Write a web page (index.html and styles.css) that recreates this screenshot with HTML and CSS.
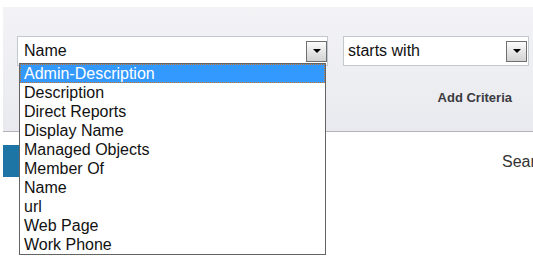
FILE: index.html
```html
<!DOCTYPE html>
<html lang="en">
<head>
  <meta charset="UTF-8">
  <title>Search Criteria</title>
  <link rel="stylesheet" href="styles.css">
</head>
<body>
  <div class="page">
    <div class="criteria-panel">
      <div class="criteria-row">
        <div class="select-box attr-select">
          <span class="select-value">Name</span>
          <span class="select-arrow"></span>
          <!-- open option list -->
          <ul class="option-list">
            <li class="option selected">Admin-Description</li>
            <li class="option">Description</li>
            <li class="option">Direct Reports</li>
            <li class="option">Display Name</li>
            <li class="option">Managed Objects</li>
            <li class="option">Member Of</li>
            <li class="option">Name</li>
            <li class="option">url</li>
            <li class="option">Web Page</li>
            <li class="option">Work Phone</li>
          </ul>
        </div>
        <div class="select-box op-select">
          <span class="select-value">starts with</span>
          <span class="select-arrow"></span>
        </div>
      </div>
      <div class="add-row">
        <span class="add-criteria">Add Criteria</span>
      </div>
    </div>

    <div class="results-row">
      <button class="search-button"></button>
      <span class="search-label">Search</span>
    </div>
  </div>
</body>
</html>
```

FILE: styles.css
```css
/* page */
html,
body {
  overflow-x: hidden;
}

body {
  margin: 0;
  font-family: "Liberation Sans", Arial, sans-serif;
  background: #ffffff;
}

.page {
  padding: 7px 0 0 3px;
  min-height: 260px;
}

/* grey criteria area */
.criteria-panel {
  box-sizing: border-box;
  height: 125px;
  padding: 29px 0 0 14px;
  background: linear-gradient(#f3f3f6, #e9eaef);
  border-bottom: 1px solid #b3b3b8;
}

.criteria-row {
  display: flex;
  gap: 15px;
}

/* fake select boxes */
.select-box {
  position: relative;
  box-sizing: border-box;
  height: 30px;
  display: flex;
  align-items: center;
  justify-content: space-between;
  padding: 0 1px 0 6px;
  background: #ffffff;
  border: 1px solid #c3c7ce;
  font-size: 16px;
  color: #111;
}

.attr-select {
  width: 311px;
  padding-right: 0;
}

.op-select {
  width: 186px;
  padding-left: 4px;
}

.select-arrow {
  box-sizing: border-box;
  width: 21px;
  height: 21px;
  display: flex;
  align-items: center;
  justify-content: center;
  border: 1px solid #6f6f6f;
  background: linear-gradient(#fbfbfb, #d2d2d2);
}

.select-arrow::after {
  content: "";
  border-left: 4px solid transparent;
  border-right: 4px solid transparent;
  border-top: 4px solid #000;
}

/* open dropdown list */
.option-list {
  position: absolute;
  left: 1px;
  top: 26px;
  box-sizing: border-box;
  width: 307px;
  margin: 0;
  padding: 0;
  list-style: none;
  background: #ffffff;
  border: 1px solid #646464;
  z-index: 2;
}

.option {
  box-sizing: border-box;
  height: 19px;
  line-height: 19px;
  padding-left: 4px;
  font-size: 16px;
  color: #111;
  white-space: nowrap;
}

.option.selected {
  background: #3399ff;
  color: #ffffff;
  border: 1px dotted #c8732a;
  line-height: 17px;
  padding-left: 3px;
}

/* add criteria link */
.add-row {
  margin-top: 22px;
  padding-right: 21px;
  text-align: right;
}

.add-criteria {
  font-size: 13px;
  font-weight: bold;
  line-height: 16px;
  color: #3a3a40;
}

/* below the panel */
.results-row {
  display: flex;
  margin-top: 13px;
  overflow: hidden;
}

.search-button {
  width: 80px;
  height: 32px;
  border: none;
  background: #1d75a6;
}

.search-label {
  margin-left: auto;
  margin-top: 8px;
  width: 31px;
  font-size: 16px;
  line-height: 18px;
  color: #333;
  white-space: nowrap;
}
```
